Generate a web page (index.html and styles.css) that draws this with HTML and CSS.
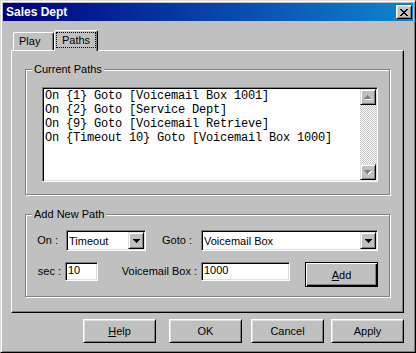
FILE: index.html
```html
<!DOCTYPE html>
<html lang="en">
<head>
    <meta charset="UTF-8">
    <title>Sales Dept</title>
    <link rel="stylesheet" href="styles.css">
</head>
<body>
    <div class="window">
        <div class="title-bar">
            <span class="title-text">Sales Dept</span>
            <button class="close-btn">
                <svg width="8" height="7" viewBox="0 0 8 7" shape-rendering="crispEdges"><path d="M0 0h2v1H0z M6 0h2v1H6z M1 1h2v1H1z M5 1h2v1H5z M2 2h4v1H2z M3 3h2v1H3z M2 4h4v1H2z M1 5h2v1H1z M5 5h2v1H5z M0 6h2v1H0z M6 6h2v1H6z" fill="#000"/></svg>
            </button>
        </div>

        <div class="dialog-body">
            <div class="tabs">
                <div class="tab">Play</div>
                <div class="tab tab-active"><span class="focus-box">Paths</span></div>
            </div>

            <div class="tab-panel">
                <div class="group group-paths">
                    <span class="group-label">Current Paths</span>
                    <div class="listbox">
                        <ul class="list-items">
                            <li>On {1} Goto [Voicemail Box 1001]</li>
                            <li>On {2} Goto [Service Dept]</li>
                            <li>On {9} Goto [Voicemail Retrieve]</li>
                            <li>On {Timeout 10} Goto [Voicemail Box 1000]</li>
                        </ul>
                        <div class="scrollbar">
                            <div class="scroll-btn">
                                <svg width="8" height="5" viewBox="0 0 8 5" shape-rendering="crispEdges"><path d="M4 1h1v1H4z M3 2h3v1H3z M2 3h5v1H2z M1 4h7v1H1z" fill="#fff"/><path d="M3 0h1v1H3z M2 1h3v1H2z M1 2h5v1H1z M0 3h7v1H0z" fill="#808080"/></svg>
                            </div>
                            <div class="scroll-track"></div>
                            <div class="scroll-btn">
                                <svg width="8" height="5" viewBox="0 0 8 5" shape-rendering="crispEdges"><path d="M1 1h7v1H1z M2 2h5v1H2z M3 3h3v1H3z M4 4h1v1H4z" fill="#fff"/><path d="M0 0h7v1H0z M1 1h5v1H1z M2 2h3v1H2z M3 3h1v1H3z" fill="#808080"/></svg>
                            </div>
                        </div>
                    </div>
                </div>

                <div class="group group-add">
                    <span class="group-label">Add New Path</span>
                    <div class="form-row">
                        <label class="field-label label-on">On :</label>
                        <div class="combo combo-on">
                            <span class="combo-value">Timeout</span>
                            <span class="drop-btn">
                                <svg width="7" height="4" viewBox="0 0 7 4" shape-rendering="crispEdges"><path d="M0 0h7v1H0z M1 1h5v1H1z M2 2h3v1H2z M3 3h1v1H3z" fill="#000"/></svg>
                            </span>
                        </div>
                        <label class="field-label label-goto">Goto :</label>
                        <div class="combo combo-goto">
                            <span class="combo-value">Voicemail Box</span>
                            <span class="drop-btn">
                                <svg width="7" height="4" viewBox="0 0 7 4" shape-rendering="crispEdges"><path d="M0 0h7v1H0z M1 1h5v1H1z M2 2h3v1H2z M3 3h1v1H3z" fill="#000"/></svg>
                            </span>
                        </div>
                    </div>
                    <div class="form-row form-row-second">
                        <label class="field-label label-sec">sec :</label>
                        <div class="text-field field-sec">10</div>
                        <label class="field-label label-box">Voicemail Box :</label>
                        <div class="text-field field-box">1000</div>
                        <button class="btn btn-default"><u>A</u>dd</button>
                    </div>
                </div>
            </div>

            <div class="dialog-buttons">
                <button class="btn btn-help"><u>H</u>elp</button>
                <button class="btn btn-ok">OK</button>
                <button class="btn btn-cancel">Cancel</button>
                <button class="btn">Apply</button>
            </div>
        </div>
    </div>
</body>
</html>
```

FILE: styles.css
```css
* {
    margin: 0;
    padding: 0;
    box-sizing: border-box;
}

body {
    width: 416px;
    height: 353px;
    background: #c0c0c0;
    font-family: "Liberation Sans", Arial, sans-serif;
    font-size: 11px;
    color: #000;
}

.window {
    width: 416px;
    height: 353px;
    padding: 2px;
    background: #c0c0c0;
    border: 1px solid;
    border-color: #dfdfdf #000 #000 #dfdfdf;
    box-shadow: inset 1px 1px #fff, inset -1px -1px #808080;
}

.title-bar {
    height: 18px;
    display: flex;
    align-items: center;
    padding: 0 1px 0 3px;
    background: linear-gradient(90deg, #000080 0%, #1084d0 100%);
}

.title-text {
    flex: 1;
    color: #fff;
    font-weight: bold;
    font-size: 12px;
}

.close-btn {
    width: 16px;
    height: 14px;
    display: flex;
    align-items: center;
    justify-content: center;
    background: #c0c0c0;
    border: 1px solid;
    border-color: #fff #000 #000 #fff;
    box-shadow: inset 1px 1px #dfdfdf, inset -1px -1px #808080;
}

.dialog-body {
    padding: 9px 9px 0 8px;
}

/* tabs */
.tabs {
    position: relative;
    z-index: 1;
    height: 20px;
    display: flex;
    align-items: flex-end;
    padding-left: 2px;
}

.tab {
    width: 41px;
    height: 18px;
    padding: 2px 0 0 5px;
    background: #c0c0c0;
    border: 1px solid;
    border-bottom: none;
    border-color: #fff #000 #000 #fff;
    border-radius: 2px 2px 0 0;
    box-shadow: inset -1px 0 #808080;
}

.tab-active {
    width: 44px;
    height: 21px;
    margin-bottom: -1px;
    padding: 1px 0 0 1px;
}

.focus-box {
    display: block;
    width: 40px;
    height: 16px;
    line-height: 16px;
    text-align: center;
    outline: 1px dotted #000;
    outline-offset: -1px;
}

.tab-panel {
    width: 393px;
    height: 263px;
    padding: 18px 0 0 13px;
    border: 1px solid;
    border-color: #fff #000 #000 #fff;
    box-shadow: inset -1px -1px #808080;
}

/* group boxes */
.group {
    position: relative;
    width: 365px;
    border: 1px solid #808080;
    box-shadow: 1px 1px #fff, inset 1px 1px #fff;
}

.group-paths {
    height: 126px;
    padding: 17px 11px 12px 16px;
}

.group-add {
    height: 83px;
    margin-top: 19px;
    padding-top: 15px;
}

.group-label {
    position: absolute;
    top: -7px;
    left: 6px;
    padding: 0 2px;
    line-height: 13px;
    background: #c0c0c0;
}

/* list */
.listbox {
    display: flex;
    width: 336px;
    height: 95px;
    padding: 1px;
    background: #fff;
    border: 1px solid;
    border-color: #808080 #fff #fff #808080;
    box-shadow: inset 1px 1px #000, inset -1px -1px #dfdfdf;
}

.list-items {
    flex: 1;
    list-style: none;
    padding-left: 1px;
    font-family: "Liberation Mono", "Courier New", monospace;
    font-size: 12px;
    letter-spacing: -0.2px;
    line-height: 14px;
}

.scrollbar {
    width: 16px;
    display: flex;
    flex-direction: column;
}

.scroll-btn {
    height: 16px;
    display: flex;
    align-items: center;
    justify-content: center;
    background: #c0c0c0;
    border: 1px solid;
    border-color: #dfdfdf #000 #000 #dfdfdf;
    box-shadow: inset 1px 1px #fff, inset -1px -1px #808080;
}

.scroll-track {
    flex: 1;
    background: conic-gradient(#c0c0c0 90deg, #fff 90deg 180deg, #c0c0c0 180deg 270deg, #fff 270deg);
    background-size: 2px 2px;
}

/* form */
.form-row {
    display: flex;
    align-items: center;
    height: 21px;
}

.form-row-second {
    height: 25px;
    margin-top: 11px;
    align-items: flex-start;
}

.field-label {
    text-align: right;
    line-height: 19px;
}

.label-on {
    width: 40px;
    padding-right: 8px;
}

.label-goto {
    width: 55px;
    padding-right: 9px;
}

.label-sec {
    width: 39px;
    padding-right: 4px;
}

.label-box {
    width: 103px;
    padding-right: 4px;
}

.combo {
    height: 21px;
    display: flex;
    align-items: center;
    padding: 1px;
    background: #fff;
    border: 1px solid;
    border-color: #808080 #fff #fff #808080;
    box-shadow: inset 1px 1px #000, inset -1px -1px #dfdfdf;
}

.combo-on {
    width: 80px;
}

.combo-goto {
    width: 177px;
}

.combo-value {
    flex: 1;
    padding-left: 1px;
}

.drop-btn {
    width: 16px;
    height: 17px;
    display: flex;
    align-items: center;
    justify-content: center;
    background: #c0c0c0;
    border: 1px solid;
    border-color: #dfdfdf #000 #000 #dfdfdf;
    box-shadow: inset 1px 1px #fff, inset -1px -1px #808080;
}

.text-field {
    height: 19px;
    padding-left: 2px;
    line-height: 15px;
    background: #fff;
    border: 1px solid;
    border-color: #808080 #fff #fff #808080;
    box-shadow: inset 1px 1px #000, inset -1px -1px #dfdfdf;
}

.field-sec {
    width: 33px;
}

.field-box {
    width: 89px;
}

/* buttons */
.btn {
    width: 73px;
    height: 24px;
    font-family: "Liberation Sans", Arial, sans-serif;
    font-size: 11px;
    color: #000;
    background: #c0c0c0;
    border: 1px solid;
    border-color: #fff #000 #000 #fff;
    box-shadow: inset 1px 1px #dfdfdf, inset -1px -1px #808080;
}

.btn-default {
    height: 25px;
    margin-left: 15px;
    border-color: #000;
    box-shadow: inset 1px 1px #fff, inset -1px -1px #000, inset -2px -2px #808080;
}

.dialog-buttons {
    display: flex;
    margin-top: 6px;
    padding-left: 72px;
}

.btn-help {
    margin-right: 13px;
}

.btn-ok {
    margin-right: 9px;
}

.btn-cancel {
    margin-right: 7px;
}
```
